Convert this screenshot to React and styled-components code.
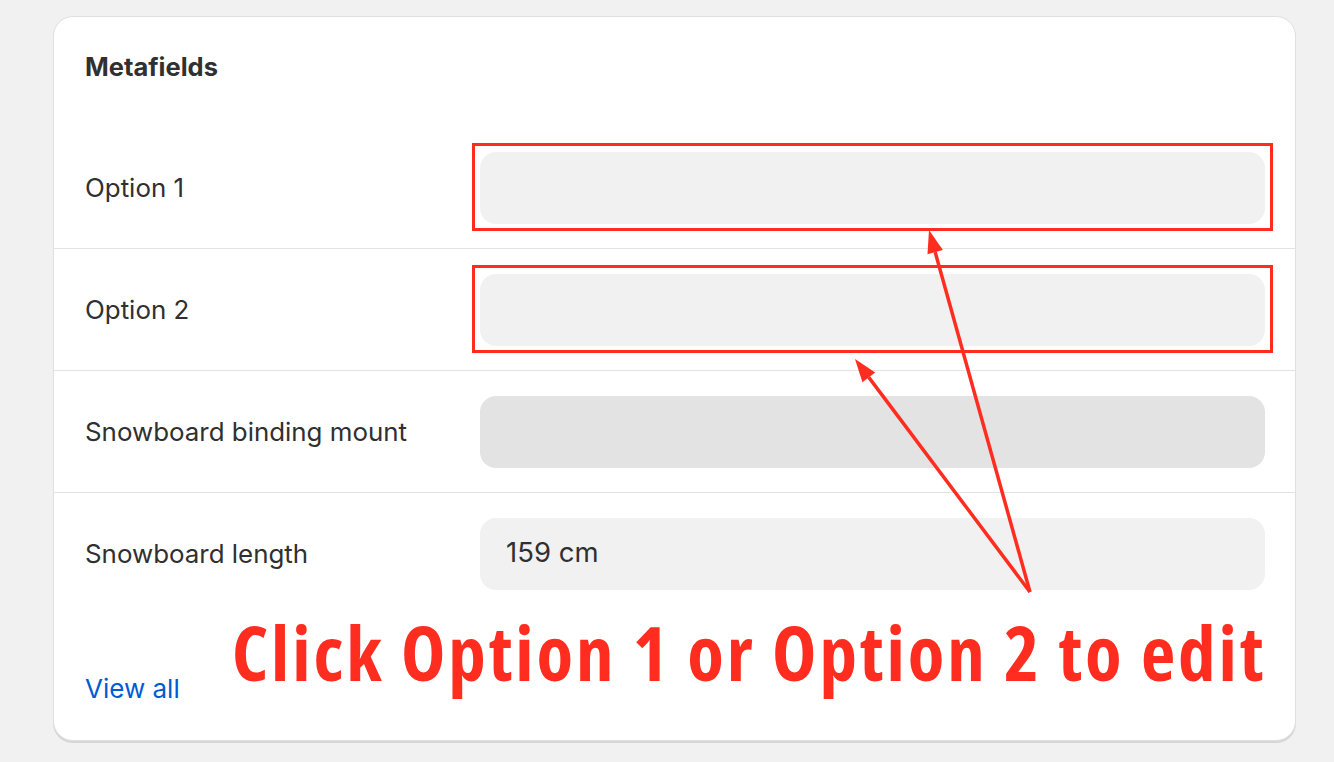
import React from "react"
import styled, {createGlobalStyle} from "styled-components"

const GlobalStyle = createGlobalStyle`
    body {
        margin: 0;
        background: #f1f1f1;
        font-family: Inter, "Noto Sans", sans-serif;
        color: #303030;
    }
`

const Page = styled.div`
    position: relative;
    width: 1334px;
    height: 762px;
    padding: 16px 38px 0 53px;
    box-sizing: border-box;
`

const Card = styled.section`
    position: relative;
    height: 725px;
    background: #fff;
    border: 1px solid #e0e0e0;
    border-radius: 20px;
    box-shadow: 0 2px 0 #d6d6d6;
    box-sizing: border-box;
`

const Header = styled.h2`
    margin: 0;
    height: 110px;
    padding: 35px 31px 0;
    box-sizing: border-box;
    font-size: 25.5px;
    font-weight: 650;
    line-height: 30px;
`

const Row = styled.div`
    display: grid;
    grid-template-columns: 395px 1fr;
    align-items: center;
    padding: 25px 30px 24px 31px;
    border-bottom: ${({last}) => (last ? "none" : "1px solid #e3e3e3")};
`

const Label = styled.span`
    font-size: 25.9px;
    line-height: 30px;
`

const Field = styled.div`
    position: relative;
    height: 72px;
    border-radius: 16px;
    background: ${({disabled}) => (disabled ? "#e3e3e3" : "#f1f1f1")};
    display: flex;
    align-items: center;
    padding: 0 26px;
    font-size: 27.5px;
    color: #303030;

    &::after {
        content: "";
        display: ${({marked}) => (marked ? "block" : "none")};
        position: absolute;
        inset: -9px -8px -7px -8px;
        border: 3.5px solid #ff2d20;
    }
`

const FieldValue = styled.span`
    margin-top: -4px;
`

const Footer = styled.div`
    padding: 60px 31px 0;
`

const ViewAll = styled.a`
    font-size: 26px;
    line-height: 30px;
    color: #005bd3;
    text-decoration: none;
`

const Note = styled.div`
    position: absolute;
    left: 178px;
    top: 593px;
    font-family: "Open Sans", "Noto Sans", sans-serif;
    font-stretch: 75%;
    font-weight: 700;
    font-size: 75px;
    line-height: 84px;
    letter-spacing: 2.9px;
    color: #ff2d20;
    white-space: nowrap;
`

const Arrows = styled.svg`
    position: absolute;
    left: 0;
    top: 0;
    pointer-events: none;
`

const Arrow = ({x1, y1, x2, y2}) => {
    const angle = Math.atan2(y2 - y1, x2 - x1)
    const len = 23
    const half = 8
    const bx = x2 - len * Math.cos(angle)
    const by = y2 - len * Math.sin(angle)
    const px = -Math.sin(angle) * half
    const py = Math.cos(angle) * half
    return (
        <g>
            <line x1={x1} y1={y1} x2={bx} y2={by} stroke="#ff2d20" strokeWidth="3.5" />
            <polygon
                points={`${x2},${y2} ${bx + px},${by + py} ${bx - px},${by - py}`}
                fill="#ff2d20"
            />
        </g>
    )
}

const fields = [
    {label: "Option 1", marked: true},
    {label: "Option 2", marked: true},
    {label: "Snowboard binding mount", disabled: true},
    {label: "Snowboard length", value: "159 cm"},
]

const App = () => (
    <>
        <GlobalStyle />
        <Page>
            <Card>
                <Header>Metafields</Header>
                {fields.map((field, i) => (
                    <Row key={field.label} last={i === fields.length - 1}>
                        <Label>{field.label}</Label>
                        <Field marked={field.marked} disabled={field.disabled}>
                            {field.value && <FieldValue>{field.value}</FieldValue>}
                        </Field>
                    </Row>
                ))}
                <Footer>
                    <ViewAll href="#">View all</ViewAll>
                </Footer>
                <Note>Click Option 1 or Option 2 to edit</Note>
            </Card>
            <Arrows width="1334" height="762" viewBox="0 0 1334 762">
                <Arrow x1={1030} y1={592} x2={929} y2={230} />
                <Arrow x1={1030} y1={592} x2={855} y2={359} />
            </Arrows>
        </Page>
    </>
)

export default App
